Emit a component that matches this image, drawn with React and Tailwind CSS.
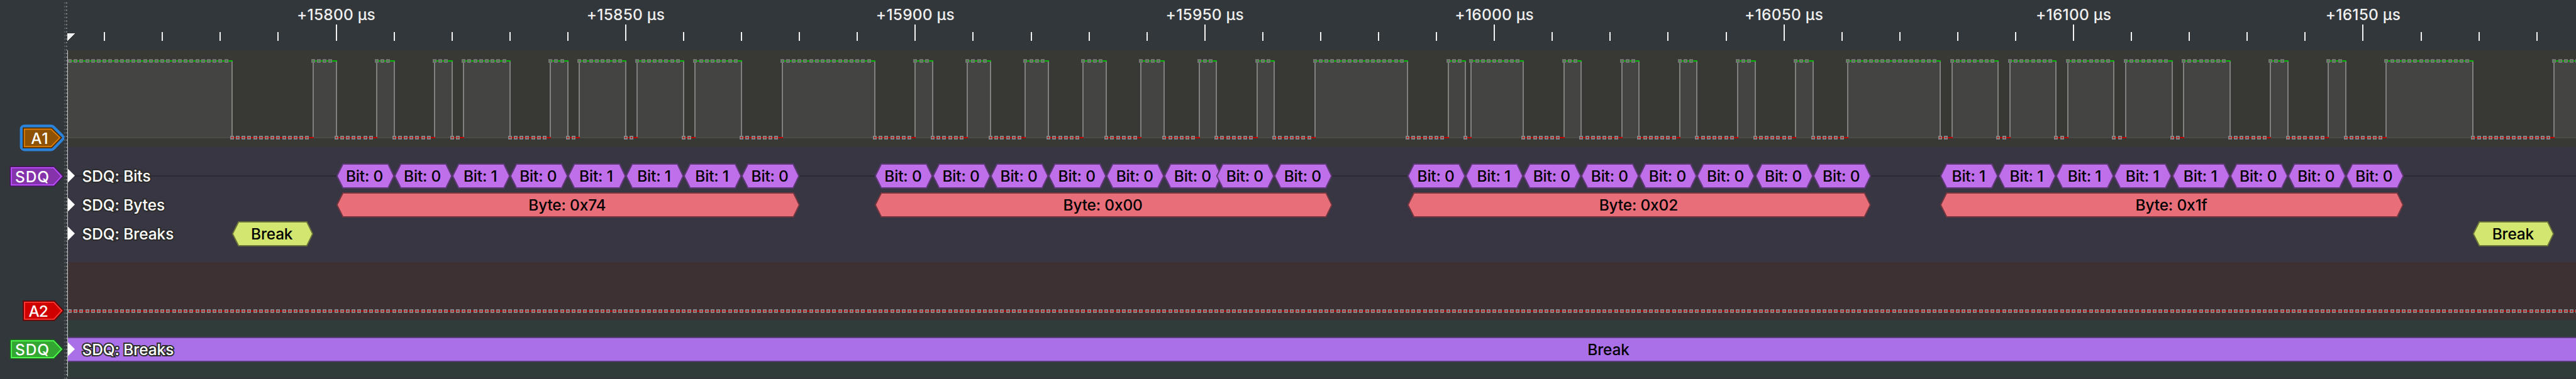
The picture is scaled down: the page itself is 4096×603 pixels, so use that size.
import React from "react";

const SCALE = 4096 / 4276;
const PLOT_LEFT = 108;
const PLOT_WIDTH = 4096 - PLOT_LEFT;

// Horizontal position inside the plot of a time in µs, counted from +15800 µs.
const px = (t) => (558 + 9.6131 * t) * SCALE - PLOT_LEFT;
const snap = (t) => Math.round(px(t));

// High periods of channel A1, [rise, fall].
const HIGHS = [
  [-47, -18], [-4, 0], [7, 10], [17, 20], [22, 30], [37, 40], [42, 50], [52, 60], [62, 70],
  [77, 93], [100, 103], [109, 113], [119, 123], [129, 133], [139, 143], [149, 152], [159, 162],
  [169, 185], [192, 195], [196, 205], [212, 215], [222, 225], [232, 235], [242, 245], [252, 255],
  [261, 277], [279, 287], [289, 297], [299, 307], [309, 317], [319, 327], [334, 337], [344, 347],
  [354, 369], [383, 400],
];

const BYTES = [
  { label: "0x74", from: 0, to: 80, bits: "00101110", edges: [0, 10, 20, 30, 40, 50, 60, 70] },
  { label: "0x00", from: 93, to: 172, bits: "00000000", edges: [93, 103, 113, 123, 133, 143, 152, 162] },
  { label: "0x02", from: 185, to: 265, bits: "01000000", edges: [185, 195, 205, 215, 225, 235, 245, 255] },
  { label: "0x1f", from: 277, to: 357, bits: "11111000", edges: [277, 287, 297, 307, 317, 327, 337, 347] },
];

const BIT_ITEMS = BYTES.flatMap((b) =>
  b.edges.map((e, i) => ({ from: e, to: e + 10, text: "Bit: " + b.bits[i] }))
);
const BYTE_ITEMS = BYTES.map((b) => ({ from: b.from, to: b.to, text: "Byte: " + b.label }));
const BREAK_ITEMS = [
  { from: -18, to: -4, text: "Break" },
  { from: 369, to: 383, text: "Break" },
];

const range = (a, b) => Array.from({ length: b - a }, (_, i) => a + i);

function Flag({ top, height, points, halo, edge, border, fill, x, y, width, text, className }) {
  return (
    <svg
      className={"block w-full shrink-0 " + className}
      viewBox={`0 ${top} 106 ${height}`}
      preserveAspectRatio="none"
    >
      {halo && <polygon points={points} fill={halo} stroke={halo} strokeWidth="15" strokeLinejoin="round" />}
      <polygon points={points} fill={edge} stroke={edge} strokeWidth="5.6" />
      <polygon points={points} fill={fill} stroke={border} strokeWidth="2" />
      <text
        x={x}
        y={y}
        textLength={width}
        className="fill-white font-[Inter,sans-serif] text-[25.6px] font-medium"
      >
        {text}
      </text>
    </svg>
  );
}

function Sidebar() {
  return (
    <aside className="flex h-full w-[108px] shrink-0">
      <div className="flex w-[101.5px] flex-col">
        <Flag
          className="mt-[182px] h-[67px] overflow-visible"
          top={190} height={70}
          points="40.5,214.5 85,214.5 99.5,228.7 85,243.5 40.5,243.5"
          halo="#2b82d9" edge="#4a2a02" border="#dc7c04" fill="#8f5202"
          x={51.4} y={238.8} width={28.6} text="A1"
        />
        <Flag
          className="h-[67px] overflow-visible"
          top={260} height={70}
          points="18.9,278.7 89,278.7 102.2,293 89,307.3 18.9,307.3"
          edge="#47185c" border="#bb4dff" fill="#8533ab"
          x={25} y={302.7} width={56.6} text="SDQ"
        />
        <Flag
          className="mt-[148px] h-[62px] overflow-visible"
          top={485} height={65}
          points="40.7,502.7 89.5,502.7 102.6,516.8 89.5,531 40.7,531"
          edge="#6b0000" border="#ff3b36" fill="#cf0000"
          x={47.4} y={526.7} width={33} text="A2"
        />
        <Flag
          className="h-[62px] overflow-visible"
          top={550} height={65}
          points="18.9,567 89,567 102.2,581 89,595 18.9,595"
          edge="#1c5a20" border="#4dfc4d" fill="#33a632"
          x={25} y={590.7} width={56.6} text="SDQ"
        />
      </div>
      <svg className="h-full w-[5.5px]" viewBox="0 0 5.5 603">
        <path d="M1 3.8V603" stroke="#858789" strokeWidth="1" strokeDasharray="1.9 3.84" />
        <path d="M3.9 3.8V603" stroke="#858789" strokeWidth="1.9" strokeDasharray="1.9 3.84" />
      </svg>
      <div className="mt-[80px] h-[519px] w-px bg-[#c4c5c5]" />
    </aside>
  );
}

function Ruler() {
  return (
    <header className="relative h-[80px] shrink-0">
      <svg className="block h-full w-full overflow-visible" shapeRendering="crispEdges">
        <path d="M-1 52.5H12L-1 65.5Z" fill="#f0f0f0" />
        {range(-4, 39).map((i) => (
          <rect
            key={i}
            x={snap(i * 10) - 1}
            y={i % 5 === 0 ? 39 : 51}
            width="2"
            height={i % 5 === 0 ? 26 : 14}
            fill="#f2f2f2"
          />
        ))}
      </svg>
      {range(0, 8).map((i) => (
        <span
          key={i}
          className="absolute top-[8.5px] -translate-x-1/2 text-[24.5px] leading-[28px] font-[450] tracking-[0.2px] whitespace-nowrap text-[#efefef]"
          style={{ left: px(i * 50) }}
        >
          +{15800 + i * 50} µs
        </span>
      ))}
    </header>
  );
}

function Dot({ x, y, color, ring }) {
  return (
    <>
      <rect x={x - 3} y={y - 3} width="6" height="6" fill={ring} />
      <rect x={x - 1} y={y - 1} width="2" height="2" fill={color} />
    </>
  );
}

function WaveRow() {
  const top = 17;
  const low = 139;
  return (
    <section className="h-[154px] shrink-0 bg-[#383835]">
      <svg className="block h-full w-full" shapeRendering="crispEdges">
        <rect x="0" y={low - 1} width={PLOT_WIDTH} height="2" fill="#4b4b48" />
        {HIGHS.map(([a, b]) => (
          <rect key={a} x={snap(a)} y={top} width={snap(b) - snap(a)} height={low - top - 1} fill="#444442" />
        ))}
        {HIGHS.slice(0, -1).map(([, b], i) => (
          <rect
            key={b}
            x={snap(b)}
            y={low - 1}
            width={snap(HIGHS[i + 1][0]) - snap(b) + 1}
            height="2"
            fill="#c40000"
          />
        ))}
        {HIGHS.map(([a, b]) => (
          <g key={a}>
            <rect x={snap(a) - 1} y={top} width="2" height={low - top - 1} fill="#80807e" />
            <rect x={snap(b) - 1} y={top} width="2" height={low - top - 1} fill="#80807e" />
            <rect x={snap(a)} y={top - 1} width={snap(b) - snap(a) + 1} height="2" fill="#00be00" />
          </g>
        ))}
        {range(-46, 388).map((t) => {
          const high = HIGHS.some(([a, b]) => t >= a && t < b);
          return high ? (
            <Dot key={t} x={snap(t)} y={top} color="#2f9a2f" ring="#737373" />
          ) : (
            <Dot key={t} x={snap(t)} y={low} color="#d80a0a" ring="#848484" />
          );
        })}
      </svg>
    </section>
  );
}

function FlatRow() {
  return (
    <section className="h-[92px] shrink-0 bg-[#3d3134]">
      <svg className="block h-full w-full" shapeRendering="crispEdges">
        <rect x="0" y="77" width={PLOT_WIDTH} height="2" fill="#c40000" />
        {range(-46, 388).map((t) => (
          <Dot key={t} x={snap(t)} y={78} color="#d80a0a" ring="#848484" />
        ))}
      </svg>
    </section>
  );
}

function Annotation({ item, fill, stroke }) {
  const w = px(item.to) - px(item.from);
  return (
    <div
      className="absolute top-0 flex h-[40px] items-center justify-center"
      style={{ left: px(item.from), width: w }}
    >
      <svg className="absolute inset-0 h-full w-full overflow-visible">
        <polygon
          points={`0.8,20 10.3,1 ${w - 10},1 ${w - 0.8},20 ${w - 10},39 10.3,39`}
          fill={fill}
          stroke={stroke}
          strokeWidth="1.9"
        />
      </svg>
      <span className="relative right-[1px] text-[24.5px] leading-[40px] font-medium tracking-[-0.2px] whitespace-nowrap text-black">
        {item.text}
      </span>
    </div>
  );
}

function LaneLabel({ children }) {
  return (
    <div className="relative flex h-full items-center">
      <svg className="h-[22px] w-[11px] -translate-y-[0.5px]" viewBox="0 0 11 22">
        <path d="M0 0L11 11L0 22Z" fill="#fff" />
      </svg>
      <span className="ml-[11.5px] text-[24.5px] leading-[40px] font-medium tracking-[-0.1px] whitespace-nowrap text-white [-webkit-text-stroke:4px_#2c2c2c] [paint-order:stroke]">
        {children}
      </span>
    </div>
  );
}

function Lane({ label, items, fill, stroke, line }) {
  return (
    <div className="relative h-[40px]">
      {line && <div className="absolute top-[19px] h-[2px] w-full bg-[#2a2a32]" />}
      {items.map((item) => (
        <Annotation key={item.from} item={item} fill={fill} stroke={stroke} />
      ))}
      <LaneLabel>{label}</LaneLabel>
    </div>
  );
}

export default function App() {
  return (
    <div className="flex h-[603px] w-[4096px] overflow-hidden bg-[#32373b] font-[Inter,sans-serif]">
      <Sidebar />
      <main className="flex min-w-0 flex-1 flex-col">
        <Ruler />
        <WaveRow />
        <section className="flex h-[183px] shrink-0 flex-col gap-[6px] overflow-hidden bg-[#373642] pt-[26px]">
          <Lane label="SDQ: Bits" items={BIT_ITEMS} fill="#bf6fe9" stroke="#5f3877" line />
          <Lane label="SDQ: Bytes" items={BYTE_ITEMS} fill="#e86f79" stroke="#74373f" />
          <Lane label="SDQ: Breaks" items={BREAK_ITEMS} fill="#d2e670" stroke="#6a743a" />
        </section>
        <FlatRow />
        <section className="h-[92px] shrink-0 bg-[#303c39] pt-[27px]">
          <div className="relative h-[40px] border-y-2 border-[#573a76] bg-[#a970e8]">
            <div className="absolute inset-x-0 -top-[2px] h-[40px]">
              <span className="absolute left-[2449.5px] -translate-x-1/2 text-[24.5px] leading-[40px] font-medium tracking-[-0.2px] text-black">
                Break
              </span>
              <LaneLabel>SDQ: Breaks</LaneLabel>
            </div>
          </div>
        </section>
      </main>
    </div>
  );
}
